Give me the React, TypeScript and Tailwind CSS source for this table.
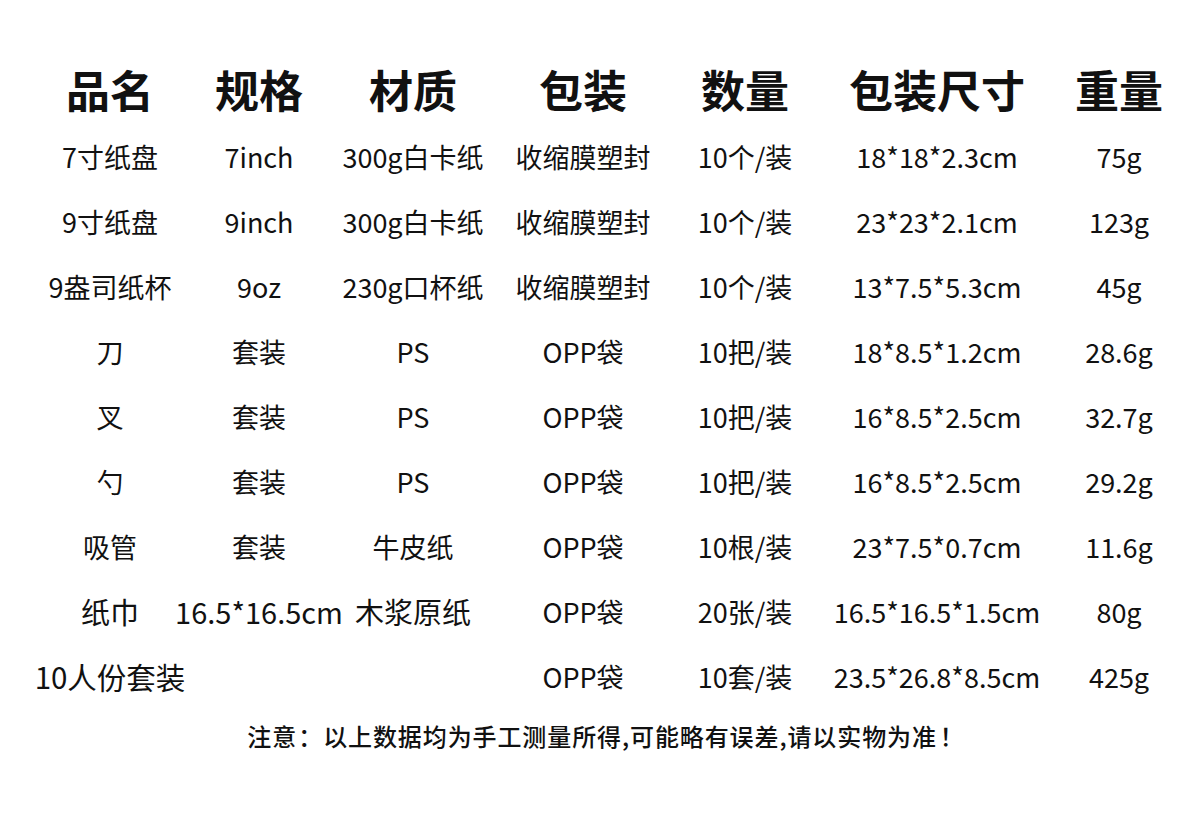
import React from "react";

const headers = ["品名", "规格", "材质", "包装", "数量", "包装尺寸", "重量"];
const rows: string[][] = [
  ["7寸纸盘", "7inch", "300g白卡纸", "收缩膜塑封", "10个/装", "18*18*2.3cm", "75g"],
  ["9寸纸盘", "9inch", "300g白卡纸", "收缩膜塑封", "10个/装", "23*23*2.1cm", "123g"],
  ["9盎司纸杯", "9oz", "230g口杯纸", "收缩膜塑封", "10个/装", "13*7.5*5.3cm", "45g"],
  ["刀", "套装", "PS", "OPP袋", "10把/装", "18*8.5*1.2cm", "28.6g"],
  ["叉", "套装", "PS", "OPP袋", "10把/装", "16*8.5*2.5cm", "32.7g"],
  ["勺", "套装", "PS", "OPP袋", "10把/装", "16*8.5*2.5cm", "29.2g"],
  ["吸管", "套装", "牛皮纸", "OPP袋", "10根/装", "23*7.5*0.7cm", "11.6g"],
  ["纸巾", "16.5*16.5cm", "木浆原纸", "OPP袋", "20张/装", "16.5*16.5*1.5cm", "80g"],
  ["10人份套装", "", "", "OPP袋", "10套/装", "23.5*26.8*8.5cm", "425g"],
];

const grid = "grid grid-cols-[160px_138px_170px_170px_154px_230px_134px]";

function cellSize(ri: number, ci: number) {
  if (ri === 7 && ci <= 2) return "text-[29px]";
  if (ri === 8 && ci === 0) return "text-[29.5px]";
  return "text-[27px]";
}

export default function App() {
  return (
    <div
      className="w-[1200px] h-[824px] bg-white text-[#111] overflow-hidden"
      style={{ fontFamily: '"Noto Sans CJK SC", "Noto Sans", sans-serif' }}
    >
      <div className="pl-[30px] pt-[52px]">
        <div className={grid + " h-[74px]"}>
          {headers.map((h, i) => (
            <div key={i} className="flex items-center justify-center whitespace-nowrap text-[44px] font-bold leading-none">
              {h}
            </div>
          ))}
        </div>
        {rows.map((r, ri) => (
          <div key={ri} className={grid + " h-[65px]"}>
            {r.map((c, ci) => (
              <div
                key={ci}
                className={"flex items-center justify-center whitespace-nowrap leading-none -translate-y-[2px] " + cellSize(ri, ci)}
              >
                {c}
              </div>
            ))}
          </div>
        ))}
      </div>
      <div className="mt-[11px] flex justify-center pl-[14px] text-[24px] leading-[28px] font-medium">
        <span className="tracking-[1px]">注意</span>
        <span className="w-[26px] text-center">：</span>
        <span className="tracking-[0.9px]">以上数据均为手工测量所得,可能略有误差,请以实物为准</span>
        <span className="w-[30px] text-center">！</span>
      </div>
    </div>
  );
}
